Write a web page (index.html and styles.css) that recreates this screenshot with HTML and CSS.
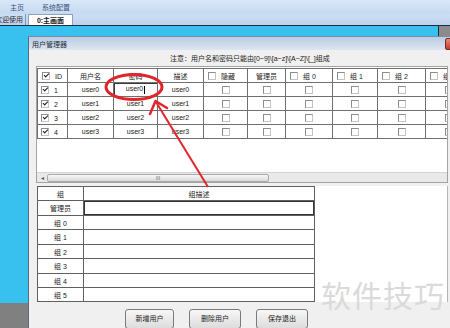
FILE: index.html
```html
<!DOCTYPE html>
<html>
<head>
  <title>用户管理器</title>
  <link rel="stylesheet" href="styles.css">
</head>
<body>
  <div class="menubar">
    <span>主页</span>
    <span>系统配置</span>
  </div>
  <div class="tabbar">
    <span class="tab tab-off">欢迎使用</span>
    <span class="tab tab-on">0:主画面</span>
  </div>
  <div class="strip"><span class="strip-end"></span></div>

  <div class="main">
    <div class="side"></div>
    <div class="dialog">
      <div class="titlebar">
        <span>用户管理器</span>
        <span class="close"></span>
      </div>
      <div class="dlg-body">
        <p class="note">注意：用户名和密码只能由[0~9]\[a~z]\[A~Z]\[_]组成</p>

        <div class="listbox">
          <div class="grid-area">
            <table class="users">
              <colgroup>
                <col style="width:30px"><col style="width:46px"><col style="width:44px"><col style="width:46px">
                <col style="width:44px"><col style="width:38px"><col style="width:47px"><col style="width:45px">
                <col style="width:48px"><col style="width:46px">
              </colgroup>
              <tr class="head">
                <td class="left"><span class="cb on"></span>ID</td>
                <td>用户名</td>
                <td>密码</td>
                <td>描述</td>
                <td class="left"><span class="cb"></span>隐藏</td>
                <td>管理员</td>
                <td class="left"><span class="cb"></span>组 0</td>
                <td class="left"><span class="cb"></span>组 1</td>
                <td class="left"><span class="cb"></span>组 2</td>
                <td class="left"><span class="cb"></span>组 3</td>
              </tr>
              <tr>
                <td class="left"><span class="cb on"></span>1</td>
                <td>user0</td>
                <td class="editing">user0<span class="caret"></span></td>
                <td>user0</td>
                <td><span class="cb"></span></td><td><span class="cb"></span></td><td><span class="cb"></span></td>
                <td><span class="cb"></span></td><td><span class="cb"></span></td><td><span class="cb"></span></td>
              </tr>
              <tr>
                <td class="left"><span class="cb on"></span>2</td>
                <td>user1</td>
                <td>user1</td>
                <td>user1</td>
                <td><span class="cb"></span></td><td><span class="cb"></span></td><td><span class="cb"></span></td>
                <td><span class="cb"></span></td><td><span class="cb"></span></td><td><span class="cb"></span></td>
              </tr>
              <tr>
                <td class="left"><span class="cb on"></span>3</td>
                <td>user2</td>
                <td>user2</td>
                <td>user2</td>
                <td><span class="cb"></span></td><td><span class="cb"></span></td><td><span class="cb"></span></td>
                <td><span class="cb"></span></td><td><span class="cb"></span></td><td><span class="cb"></span></td>
              </tr>
              <tr>
                <td class="left"><span class="cb on"></span>4</td>
                <td>user3</td>
                <td>user3</td>
                <td>user3</td>
                <td><span class="cb"></span></td><td><span class="cb"></span></td><td><span class="cb"></span></td>
                <td><span class="cb"></span></td><td><span class="cb"></span></td><td><span class="cb"></span></td>
              </tr>
            </table>
          </div>
          <div class="hscroll">
            <span class="arrow">&#9666;</span>
            <span class="thumb">III</span>
          </div>
        </div>

        <div class="lower">
          <table class="groups">
            <colgroup><col style="width:46px"><col></colgroup>
            <tr class="r14"><td>组</td><td>组描述</td></tr>
            <tr class="r15"><td>管理员</td><td class="selected"></td></tr>
            <tr class="r14"><td>组 0</td><td></td></tr>
            <tr class="r15"><td>组 1</td><td></td></tr>
            <tr class="r14"><td>组 2</td><td></td></tr>
            <tr class="r15"><td>组 3</td><td></td></tr>
            <tr class="r14"><td>组 4</td><td></td></tr>
            <tr class="r14"><td>组 5</td><td></td></tr>
          </table>
          <div class="panel"></div>
        </div>

        <div class="buttons">
          <button class="btn btn-add">新增用户</button>
          <button class="btn">删除用户</button>
          <button class="btn">保存退出</button>
        </div>
      </div>
    </div>
  </div>

  <div class="watermark">软件技巧</div>

  <svg class="marks" width="450" height="328" viewBox="0 0 450 328">
    <ellipse cx="134" cy="87" rx="28" ry="12.5" fill="none" stroke="#e1252b" stroke-width="3"/>
    <line x1="208" y1="187" x2="156" y2="102" stroke="#e1252b" stroke-width="2"/>
    <polyline points="150,114 155.5,101 167,108" fill="none" stroke="#e1252b" stroke-width="2.5" stroke-linecap="round" stroke-linejoin="round"/>
  </svg>
</body>
</html>
```

FILE: styles.css
```css
body {
  margin: 0;
  width: 450px;
  height: 328px;
  overflow: hidden;
  position: relative;
  font-family: "Liberation Sans", "Noto Sans CJK SC", sans-serif;
  font-size: 7px;
  color: #222;
  background: #38c1ee;
}

.menubar {
  height: 14px;
  display: flex;
  align-items: center;
  gap: 18px;
  padding-left: 10px;
  background: linear-gradient(#d9e8f9, #c5d9f1);
  color: #3d5478;
}

.tabbar {
  height: 12px;
  box-sizing: border-box;
  display: flex;
  align-items: flex-end;
  background: linear-gradient(#cddff4, #bcd2ed);
  border-bottom: 1px solid #1d2d3e;
  overflow: hidden;
}

.tab {
  height: 11px;
  line-height: 11px;
  box-sizing: border-box;
  white-space: nowrap;
  flex: none;
}

.tab-off {
  margin-left: -5px;
  width: 31px;
  color: #333;
  border-right: 1px solid #7f95b2;
}

.tab-on {
  width: 45px;
  margin-left: 2px;
  text-align: center;
  font-weight: bold;
  background: #fff;
  border: 1px solid #8ea3bf;
  border-bottom: none;
}

.strip {
  height: 10px;
  display: flex;
  justify-content: flex-end;
}

.strip-end {
  width: 11px;
  background: #8b8b8b;
  border-left: 1px solid #1d2d3e;
}

.main {
  display: flex;
  height: 292px;
}

.side {
  width: 28px;
  flex: none;
  background: linear-gradient(#38c1ee 267px, #808080 267px);
}

.dialog {
  flex: 0 0 440px;
  background: #f0f0f0;
  border-left: 1px solid #5b6b7e;
  border-top: 1px solid #7d8ea3;
}

.titlebar {
  height: 13px;
  display: flex;
  align-items: center;
  justify-content: space-between;
  padding-left: 3px;
  background: linear-gradient(#b9cce3, #dde6f0);
  color: #1e2a38;
}

.close {
  width: 16px;
  height: 10px;
  margin-right: 6px;
  border-radius: 2px;
  background: linear-gradient(#e88a7f, #c7392c);
  border: 1px solid #7a2a22;
}

.note {
  margin: 0;
  height: 16px;
  line-height: 18px;
  padding-left: 141px;
  white-space: nowrap;
}

.listbox {
  margin-left: 7px;
  width: 412px;
  height: 117px;
  box-sizing: border-box;
  border: 1px solid #a3a3a3;
  background: #fff;
}

.grid-area {
  height: 105px;
  overflow: hidden;
}

.users {
  border-collapse: collapse;
  table-layout: fixed;
  width: 434px;
  margin-top: 1px;
}

.users td {
  height: 13px;
  padding: 0;
  border: 1px solid #6f6f6f;
  text-align: center;
  white-space: nowrap;
  overflow: hidden;
}

.users td.left {
  text-align: left;
  padding-left: 3px;
}

.users .head td.left {
  padding-left: 4px;
}

.users td.editing {
  box-shadow: inset 1px 1px 0 #3a3a3a;
}

.caret {
  display: inline-block;
  width: 0;
  height: 8px;
  margin-left: 1px;
  border-right: 1px solid #000;
  vertical-align: middle;
}

.cb {
  display: inline-block;
  position: relative;
  width: 6px;
  height: 6px;
  border: 1px solid #8d8d8d;
  border-right-color: #c4c4c4;
  border-bottom-color: #c4c4c4;
  background: #fff;
  vertical-align: -1px;
}

.left .cb {
  margin-right: 5px;
}

.cb.on::after {
  content: "";
  position: absolute;
  left: 1.5px;
  top: -0.5px;
  width: 1.5px;
  height: 4px;
  border: solid #1a1a1a;
  border-width: 0 1.5px 1.5px 0;
  transform: rotate(45deg);
}

.hscroll {
  height: 10px;
  box-sizing: border-box;
  display: flex;
  align-items: center;
  background: #e9e9e9;
  border-top: 1px solid #d3d3d3;
}

.arrow {
  width: 10px;
  text-align: center;
  font-size: 6px;
  color: #555;
}

.thumb {
  width: 222px;
  height: 8px;
  box-sizing: border-box;
  border: 1px solid #a9a9a9;
  border-radius: 2px;
  background: linear-gradient(#f8f8f8, #d9d9d9);
  text-align: center;
  font-size: 5px;
  line-height: 6px;
  color: #666;
}

.lower {
  display: flex;
  width: 411px;
  margin: 3px 0 0 8px;
}

.groups {
  border-collapse: collapse;
  table-layout: fixed;
  width: 278px;
  flex: none;
}

.groups td {
  padding: 0;
  border: 1px solid #606060;
  background: #fff;
  text-align: center;
  white-space: nowrap;
}

.groups .r14 td {
  height: 13px;
}

.groups .r15 td {
  height: 14px;
}

.groups td.selected {
  box-shadow: inset 0 0 0 1px #333;
}

.panel {
  flex: 1;
  background: #fff;
  border-right: 1px solid #b5b5b5;
}

.buttons {
  display: flex;
  gap: 15px;
  margin-top: 7px;
  padding-left: 96px;
}

.btn {
  width: 52px;
  height: 20px;
  padding: 0;
  border: 1px solid #7a7a7a;
  border-radius: 3px;
  background: linear-gradient(#f7f7f7, #dcdcdc);
  font-family: "Liberation Sans", "Noto Sans CJK SC", sans-serif;
  font-size: 7px;
  color: #222;
  line-height: 18px;
  text-align: center;
}

.btn-add {
  width: 49px;
}

.watermark {
  position: absolute;
  left: 321px;
  top: 279px;
  font-family: "Noto Sans CJK SC", sans-serif;
  font-size: 30px;
  line-height: 30px;
  letter-spacing: 1px;
  color: #dadada;
}

.marks {
  position: absolute;
  left: 0;
  top: 0;
  pointer-events: none;
}
```
